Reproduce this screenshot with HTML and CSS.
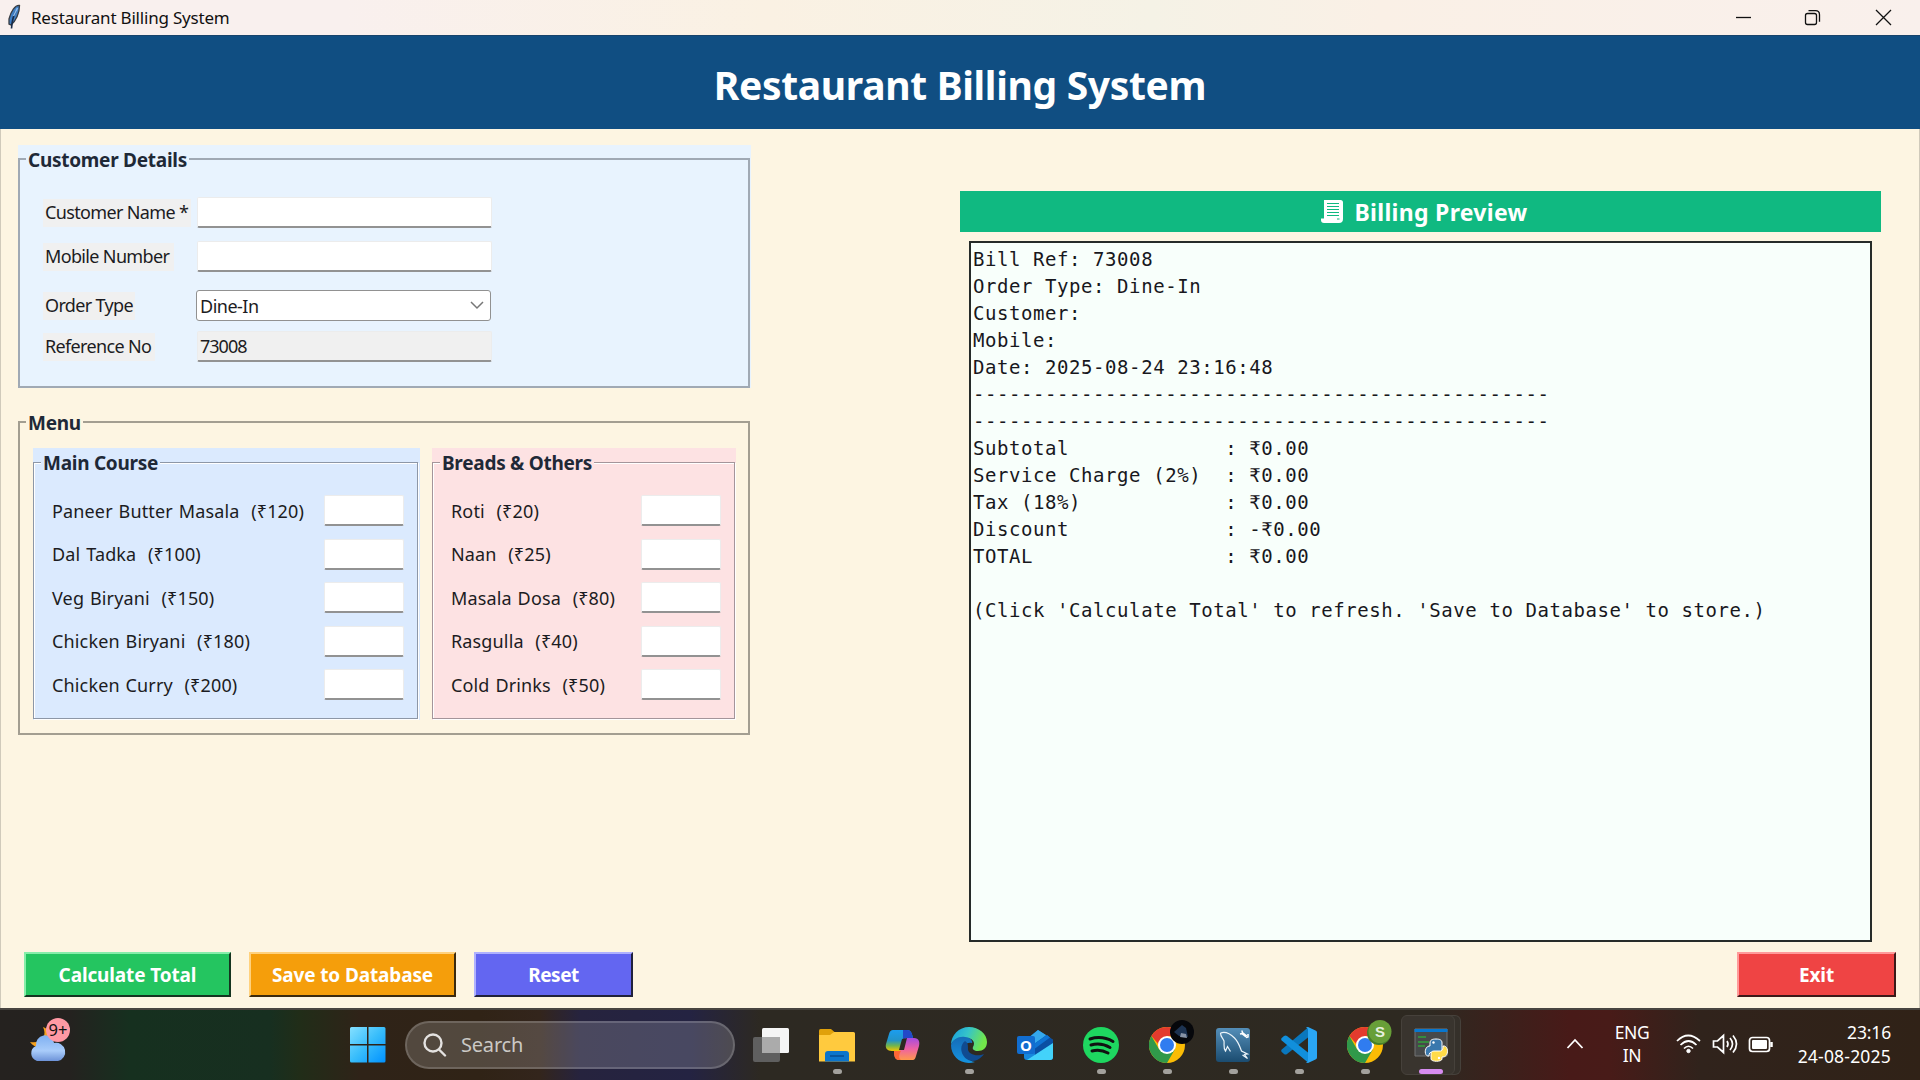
FILE: index.html
```html
<!DOCTYPE html>
<html lang="en">
<head>
<meta charset="utf-8">
<title>Restaurant Billing System</title>
<link rel="stylesheet" href="styles.css">
</head>
<body>
<div class="titlebar">
  <svg class="feather" width="16" height="26" viewBox="0 0 16 26"><path d="M13.500 1.500C9 1 5 7 3 15v5l2 1C10 17 13.500 9 13.500 1.500Z" fill="#3f7fc6" stroke="#3a3d42" stroke-width="1.300"/><path d="M10 7C7 12 6 17 5.500 24.500" fill="none" stroke="#172b4a" stroke-width="1.600"/><path d="M11.500 4 7.500 12" stroke="#8fbdf0" stroke-width="1.500"/></svg>
  <span class="window-name">Restaurant Billing System</span>
  <svg class="window-controls" width="180" height="34" viewBox="0 0 180 34" fill="none" stroke="#111" stroke-width="1.300"><path d="M16 16.500h15"/><rect x="85.500" y="12.500" width="11" height="11" rx="2"/><path d="M88.500 9.700h7q4 0 4 4v7"/><path d="m156 9 15 15m0-15-15 15"/></svg>
</div>
<header class="banner"><h1>Restaurant Billing System</h1></header>
<main class="app">
  <div class="columns">
    <div class="left">
      <section class="group customer">
        <div class="frame">
          <h2 class="legend">Customer Details</h2>
          <div class="field f1"><label class="l-name">Customer Name *</label><div class="entry"></div></div>
          <div class="field f2"><label class="l-mobile">Mobile Number</label><div class="entry"></div></div>
          <div class="field f3"><label class="l-type">Order Type</label><div class="entry combo"><span>Dine-In</span><svg width="14" height="9" viewBox="0 0 14 9"><path d="m1 1 6 6 6-6" fill="none" stroke="#777" stroke-width="1.500"/></svg></div></div>
          <div class="field f4"><label class="l-ref">Reference No</label><div class="entry readonly">73008</div></div>
        </div>
      </section>
      <section class="menu">
        <h2 class="legend">Menu</h2>
        <div class="group main-course">
          <div class="frame">
            <h2 class="legend">Main Course</h2>
            <div class="item"><span>Paneer Butter Masala&nbsp; (₹120)</span><div class="qty"></div></div>
            <div class="item"><span>Dal Tadka&nbsp; (₹100)</span><div class="qty"></div></div>
            <div class="item"><span>Veg Biryani&nbsp; (₹150)</span><div class="qty"></div></div>
            <div class="item"><span>Chicken Biryani&nbsp; (₹180)</span><div class="qty"></div></div>
            <div class="item"><span>Chicken Curry&nbsp; (₹200)</span><div class="qty"></div></div>
          </div>
        </div>
        <div class="group breads">
          <div class="frame">
            <h2 class="legend">Breads &amp; Others</h2>
            <div class="item"><span>Roti&nbsp; (₹20)</span><div class="qty"></div></div>
            <div class="item"><span>Naan&nbsp; (₹25)</span><div class="qty"></div></div>
            <div class="item"><span>Masala Dosa&nbsp; (₹80)</span><div class="qty"></div></div>
            <div class="item"><span>Rasgulla&nbsp; (₹40)</span><div class="qty"></div></div>
            <div class="item"><span>Cold Drinks&nbsp; (₹50)</span><div class="qty"></div></div>
          </div>
        </div>
      </section>
    </div>
    <div class="right">
      <div class="preview-title">
        <svg width="23" height="25" viewBox="0 0 23 25"><path d="M3 1h16.500q2.500 0 2.500 2.500V20q0 4-4 4H3q-3 0-3-3v-1.500h3Z" fill="#fff"/><path d="M6 4.500h12M6 7.500h12M6 10.500h12M6 13.500h12M6 16.500h12M16 20h2.500" fill="none" stroke="#10b981" stroke-width="1.100"/></svg>
        <h2>Billing Preview</h2>
      </div>
<pre class="bill">Bill Ref: 73008
Order Type: Dine-In
Customer:
Mobile:
Date: 2025-08-24 23:16:48
------------------------------------------------
------------------------------------------------
Subtotal             : ₹0.00
Service Charge (2%)  : ₹0.00
Tax (18%)            : ₹0.00
Discount             : -₹0.00
TOTAL                : ₹0.00

(Click 'Calculate Total' to refresh. 'Save to Database' to store.)</pre>
    </div>
  </div>
  <div class="actions">
    <button class="btn green">Calculate Total</button>
    <button class="btn orange">Save to Database</button>
    <button class="btn indigo">Reset</button>
    <button class="btn red">Exit</button>
  </div>
</main>
<footer class="taskbar">
  <svg class="weather" width="42" height="46" viewBox="0 0 42 46">
    <defs><linearGradient id="cloud" x2="0" y2="1"><stop stop-color="#7fb0f2"/><stop offset=".6" stop-color="#a9ccfa"/><stop offset="1" stop-color="#6d93d8"/></linearGradient></defs>
    <path d="M14 9c4 8 0 17-13 15 5 8 20 7 21-4 0-5-3-9-8-11Z" fill="#f5a11d"/>
    <path d="M8 43a8 8 0 0 1-1-15 9 9 0 0 1 18-3 9 9 0 0 1 4 18Z" fill="url(#cloud)"/>
    <circle cx="29" cy="12" r="12" fill="#ff99a4"/><text x="29" y="17.500" text-anchor="middle" class="badge-count">9+</text>
  </svg>
  <svg class="start" width="36" height="36" viewBox="0 0 36 36"><defs><linearGradient id="win" x2="1" y2="1"><stop stop-color="#85e0ff"/><stop offset=".5" stop-color="#38bdfb"/><stop offset="1" stop-color="#0091ff"/></linearGradient></defs><path d="M1.500 0H17v17H0V1.500Q0 0 1.500 0ZM18.500 0H34q1.500 0 1.500 1.500V17h-17ZM0 18.500h17v17H1.500Q0 35.500 0 34ZM18.500 18.500h17V34q0 1.500-1.500 1.500H18.500Z" fill="url(#win)"/></svg>
  <div class="search"><svg width="24" height="24" viewBox="0 0 24 24" fill="none" stroke="#e4e2e0" stroke-width="2.400"><circle cx="10" cy="10" r="8.500"/><path d="m16 16.500 6 6" stroke-linecap="round"/></svg><span>Search</span></div>
  <div class="tasks">
    <div class="task"><svg width="36" height="36" viewBox="0 0 36 36"><rect y="10" width="27" height="25" rx="2" fill="#5f5f5f"/><rect x="9" y="1" width="27" height="25" rx="1.500" fill="#f5f5f5"/><path d="M9 10h18v16H9Z" fill="#ababab"/></svg></div>
    <div class="task open"><svg width="36" height="36" viewBox="0 0 36 36"><path d="M0 3.500Q0 2 1.500 2H12l3.500 3L12 9H0Z" fill="#e0a10b"/><path d="M0 8h11l4-3h19.500q1.500 0 1.500 1.500V34.500H0Z" fill="#ffca3e"/><path d="M6 34.500V27q0-3 3-3h18q3 0 3 3v7.500Z" fill="#0c75cc"/><path d="M11 29h14" stroke="#084f94" stroke-width="1.600"/></svg></div>
    <div class="task"><svg width="36" height="36" viewBox="0 0 36 36"><defs><linearGradient id="cp1" x2="0" y2="1"><stop stop-color="#1b9df0"/><stop offset=".5" stop-color="#2394c8"/><stop offset=".75" stop-color="#72b54d"/><stop offset="1" stop-color="#f5c400"/></linearGradient><linearGradient id="cp2" x2="0" y2="1"><stop stop-color="#a64be0"/><stop offset=".5" stop-color="#ee62a3"/><stop offset="1" stop-color="#ff984c"/></linearGradient></defs><path d="M8 3h14c4 0 5 3 6 8h-4c-4 0-5 2-6 6l-2 7H7c-5 0-7-3-6-7L4 7q1-4 4-4Z" fill="url(#cp1)"/><path d="M18 3h4c4 0 5 3 6 8h-4l-6 2Z" fill="#2348c8"/><path d="M28 33H14c-4 0-5-4-5-9h3c4 0 5-2 6-6l2-7h9c5 0 6 4 5 8l-3 10q-1 4-3 4Z" fill="url(#cp2)"/><path d="m17 12-3 11h5l3-12Z" fill="#2d2922"/><path d="M9 24h7c-2 3-3 7 0 9h-2c-4 0-5-4-5-9Z" fill="#ff6735"/></svg></div>
    <div class="task open"><svg width="36" height="36" viewBox="0 0 36 36"><defs><linearGradient id="ed1" x2="1" y2=".3"><stop stop-color="#159be2"/><stop offset=".5" stop-color="#36c4c8"/><stop offset="1" stop-color="#72e64a"/></linearGradient><linearGradient id="ed2" x2="0" y2="1"><stop stop-color="#156bb7"/><stop offset="1" stop-color="#1593df"/></linearGradient></defs><path d="M0 18C0 8 8 0 18 0s18 7 18 15c0 6-4 9-9 9-4 0-6-2-5-4 3-5-1-9-6-9C8 10 2 12 0 18Z" fill="url(#ed1)"/><path d="M0 18c2-6 8-9 14-8 5 0 8 4 7 6-7-2-9 5-7 10 2 6 7 9 10 9C11 39 0 30 0 18Z" fill="url(#ed2)"/><path d="M14 14c-4 3-5 9-2 14 4 7 14 9 21-1-6 3-17 1-16-6 0-3 0-5-3-7Z" fill="#104b91"/></svg></div>
    <div class="task"><svg width="36" height="36" viewBox="0 0 36 36"><path d="M7 14 21 3l15 10v17q0 3-3 3H10q-3 0-3-3Z" fill="#1688dd"/><path d="m7 15 14-12 8 5-16 13Z" fill="#35a8ec"/><path d="m17 17 13-9 6 5v5L18 29Z" fill="#0a4fa3"/><path d="M17 17 30 8l3 2.500-15 11Z" fill="#0f74d4"/><path d="m10 33 26-17v14q0 3-3 3Z" fill="#43d2fa"/><rect y="9" width="18" height="18" rx="2" fill="#116dd0"/><text x="9" y="23.500" text-anchor="middle" class="icon-letter">O</text></svg></div>
    <div class="task open"><svg width="36" height="36" viewBox="0 0 36 36"><circle cx="18" cy="18" r="18" fill="#1ed760"/><path d="M7 12c8-2.500 16-1.500 23 2.500M8 18c7-2 13-1 19 2.500M9 24c6-1.500 11-.700 16 2" fill="none" stroke="#111" stroke-width="3" stroke-linecap="round"/></svg></div>
    <div class="task open"><svg width="46" height="44" viewBox="0 0 46 44" class="badged"><use href="#chrome"/><circle cx="33" cy="13" r="12" fill="#06070b"/><path d="m25 13 8-7 4 3 2 9-9-1Z" fill="#1d3352"/><path d="m32 14 5 1 1 4-7-1Z" fill="#8792a5"/></svg></div>
    <div class="task open"><svg width="36" height="36" viewBox="0 0 36 36"><defs><linearGradient id="sql" x2="0" y2="1"><stop stop-color="#548eb8"/><stop offset="1" stop-color="#1b4c70"/></linearGradient></defs><rect x="1" y="1" width="34" height="34" rx="3" fill="url(#sql)"/><path d="M5.500 6c5-2 10 1 14 5 4 4 5 8 7 13l6 3-3 .500 3 4-5-3.500M5.500 6c0 4 2.500 5 3.500 8 .500 4-1 7 1.500 10l2-4.500 3 5" fill="none" stroke="#edf5fa" stroke-width="1.200"/><path d="m27 6 4.500 3.500" stroke="#fff" stroke-width="2.700"/><path d="m27 3.500.500 3-2.500 .500m6 3.500 2-.500V7" stroke="#fff" stroke-width="1.500" fill="none"/></svg></div>
    <div class="task open"><svg width="36" height="36" viewBox="0 0 36 36"><path d="M.700 22.500 27 .500v10L6 27q-1.500 1-3 0L.700 25q-1-1.200 0-2.500Z" fill="#0a77bd"/><path d="M.700 13.500Q-.300 12 .700 11L3 9q1.500-1 3 0l21 16.500v10Z" fill="#118fdc"/><path d="M27 0l7.500 3.500Q36 4 36 5.500v25q0 1.500-1.500 2L27 36q-1.500 0-2-1 2 .500 2-1.500v-31Q27 .500 25 1q.500-1 2-1Z" fill="#2aa6f5"/></svg></div>
    <div class="task open"><svg width="46" height="44" viewBox="0 0 46 44" class="badged"><use href="#chrome"/><circle cx="32" cy="14" r="12" fill="#467f2b"/><circle cx="33" cy="12.500" r="11.500" fill="#689f38"/><text x="33" y="18" text-anchor="middle" class="profile-letter">S</text></svg></div>
    <div class="task open active"><svg width="36" height="36" viewBox="0 0 36 36"><path d="M2 2h32v27H2Z" fill="#47494a" stroke="#727272"/><path d="M1.500 2h33v3h-33Z" fill="#0877cf"/><path d="M5 10h8M5 15h11M5 19h7" stroke="#32a33a" stroke-width="1.300"/><path d="M17 18v-3c0-3 2-4 6-4s6 1 6 4v6c0 2-1 3-3 3h-6c-3 0-4 1-4 4-5 1-5-9 0-10Z" transform="translate(0 1)" fill="#3a78ad" stroke="#fff"/><path d="M30 19c6-1 6 11 0 11h-1v2c0 3-11 3-11 0v-5c0-2 1-3 3-3h6c2 0 3-1 3-5Z" fill="#ffdb48" stroke="#fff"/><circle cx="20.500" cy="15.500" r="1.200" fill="#fff"/><circle cx="26" cy="31" r="1.200" fill="#fff"/></svg></div>
  </div>
  <div class="tray">
    <svg class="up" width="18" height="12" viewBox="0 0 18 12"><path d="m1.500 10 7.500-8 7.500 8" fill="none" stroke="#fff" stroke-width="1.800"/></svg>
    <div class="lang">ENG<br>IN</div>
    <svg class="status" width="98" height="24" viewBox="0 0 98 24" fill="none" stroke="#fff" stroke-width="1.700"><path d="M1 9q11-11 23 0M4.500 13q8-8 16 0M8 16.500q4.500-4.500 9 0"/><circle cx="12.500" cy="19" r="1.700" fill="#fff" stroke-width="1"/><path d="M37.500 9h4l6-5.500v17l-6-5.500h-4ZM51 9q2 3 0 6M54 6q5 6 0 12M57 3.500q7 8.500 0 17"/><rect x="73.500" y="5.500" width="20" height="14" rx="3"/><rect x="76" y="8" width="15" height="9" rx="1" fill="#fff" stroke="none"/><path d="M95.500 10v5" stroke-width="2.500"/></svg>
    <div class="clock">23:16<br><span class="date">24-08-2025</span></div>
  </div>
</footer>
<svg width="0" height="0" class="defs"><defs><g id="chrome"><circle cx="18" cy="26" r="18" fill="#fbbc05"/><path d="M2.400 17A18 18 0 0 1 33.600 17H18v18L2.400 17Z" fill="#e33b2e"/><path d="M2.400 17A18 18 0 0 0 18 44l7.800-13.500L10.200 30.500Z" fill="#30994a"/><circle cx="18" cy="26" r="9" fill="#fff"/><circle cx="18" cy="26" r="7" fill="#307cf0"/></g></defs></svg>
</body>
</html>
```
FILE: styles.css
```css
* { box-sizing: border-box; }
body {
  margin: 0;
  width: 1920px;
  height: 1080px;
  overflow: hidden;
  display: flex;
  flex-direction: column;
  background: #fdf5e2;
  color: #1c1c22;
  font-family: "Noto Sans", "Open Sans", sans-serif;
  font-size: 18px;
}
h1, h2 { margin: 0; }
.defs { position: absolute; }
.titlebar {
  height: 35px;
  flex: none;
  display: flex;
  align-items: center;
  background: linear-gradient(90deg, #f9f0ee 0, #f9f0ee 18%, #faf1e3 40%, #f5f2e6 60%, #faf0e6 72%, #f9f0ec 100%);
}
.feather { margin-left: 6px; margin-bottom: 1px; }
.window-name { margin-left: 9px; font-size: 17px; letter-spacing: -0.2px; color: #111; }
.window-controls { margin-left: auto; margin-right: 20px; }
.banner {
  height: 94.300px;
  flex: none;
  background: #104e82;
  border-top: 1px solid #17436b;
  display: flex;
  justify-content: center;
  align-items: center;
}
.banner h1 { color: #fff; font-size: 39px; line-height: 50px; letter-spacing: -0.33px; white-space: nowrap; padding-top: 4px; }
.app {
  flex: 1;
  display: flex;
  flex-direction: column;
  border: solid #d0cabb;
  border-width: 0 1px;
}
.columns { flex: 1; display: flex; justify-content: space-between; padding: 16px 38px 0 17px; }
.left { width: 733px; }
.group { padding-top: 14px; }
.frame { border: 2px solid #a0a9b4; height: 100%; }
.legend {
  width: max-content;
  margin: -14px 0 0 6px;
  padding: 0 2px;
  font-size: 19px;
  line-height: 28px;
  letter-spacing: -0.27px;
  color: #1f2937;
  white-space: nowrap;
}
.customer { height: 243px; padding-top: 13px; background: #e8f3fe; }
.customer .frame { margin-right: 1px; }
.customer .legend { background: #e8f3fe; }
.field { display: flex; align-items: center; justify-content: space-between; height: 31px; padding-left: 23px; }
.field label { background: #f0f0f0; height: 28px; line-height: 27px; padding-left: 2px; letter-spacing: -0.65px; white-space: nowrap; }
.l-name { width: 148px; }
.l-mobile { width: 131px; }
.l-type { width: 92px; }
.l-ref { width: 112px; }
.entry {
  width: 295px;
  height: 31px;
  margin-right: 256px;
  background: #fff;
  border: 1px solid #ececec;
  border-bottom: 2px solid #929292;
  border-radius: 2px;
  padding: 0 2px;
  line-height: 28px;
  letter-spacing: -1px;
}
.combo { margin-right: 257px; border: 1.500px solid #919191; border-radius: 3px; display: flex; justify-content: space-between; align-items: center; padding: 0 6px 0 3px; letter-spacing: -0.5px; }
.readonly { background: #f0f0f0; }
.f1 { margin-top: 23px; }
.f2 { margin-top: 13px; }
.f3 { margin-top: 18px; }
.f4 { margin-top: 10px; }
.menu {
  width: 732px;
  height: 314px;
  margin-top: 33px;
  border: 2px solid #a39e91;
  display: grid;
  grid-template-columns: 387px 304px;
  grid-template-rows: 25px 272px;
  column-gap: 12px;
  padding-left: 13px;
}
.menu > .legend { grid-column: 1 / 3; margin-left: -7px; background: #fdf5e2; }
.main-course { background: #dbeafe; }
.main-course .legend { background: #dbeafe; }
.breads { background: #fde2e3; }
.breads .legend { background: #fde2e3; }
.menu .group .legend { margin-left: 7px; }
.menu .frame { border: 1.500px solid #8d97a7; box-shadow: inset 1px 1px #fff, 1px 1px #fff; margin-right: 2px; height: 257px; }
.menu .breads .frame { border-color: #a4959a; margin-right: 1px; }
.item { display: flex; align-items: center; justify-content: space-between; height: 31px; margin: 0 13px 12.500px 18px; letter-spacing: 0.15px; word-spacing: 1px; white-space: nowrap; }
.frame .legend + .item { margin-top: 18px; }
.qty { width: 80px; height: 31px; background: #fff; border: 1px solid #ececec; border-bottom: 2px solid #929292; border-radius: 2px; }
.right { width: 921px; padding-top: 46px; }
.preview-title { height: 41px; background: #10b981; display: flex; align-items: center; justify-content: center; gap: 10px; padding-left: 8px; color: #fff; }
.preview-title h2 { font-size: 23px; line-height: 30px; letter-spacing: 0.3px; }
.bill {
  margin: 9px 9px 0;
  height: 701px;
  background: #f8fffb;
  border: 2px solid #262b29;
  padding: 3px 2px;
  font: 19px/27px "DejaVu Sans Mono", monospace;
  letter-spacing: 0.57px;
  color: #18181d;
}
.actions { display: flex; gap: 18px; padding: 0 23px 11px; }
.btn {
  height: 45px;
  width: 207px;
  padding: 1px 0 0;
  border: 2px solid #222;
  color: #fff;
  font: bold 19px/28px "Noto Sans", sans-serif;
  letter-spacing: -0.13px;
}
.green { background: #24c560; border-color: #86eeaa #153420 #153420 #86eeaa; }
.orange { background: #f59e0b; border-color: #ffd17d #3c2a0e #3c2a0e #ffd17d; }
.indigo { background: #6366f1; border-color: #afb1ff #20213c #20213c #afb1ff; width: 159px; letter-spacing: -0.5px; }
.red { background: #ef4444; border-color: #ff9a9a #3c1919 #3c1919 #ff9a9a; width: 159px; margin-left: auto; }
.taskbar {
  height: 72px;
  flex: none;
  display: flex;
  align-items: center;
  color: #fff;
  border-top: 2px solid #484440;
  background: linear-gradient(90deg, #25221f 0, #24221f 70px, #16301f 130px, #172f20 270px, #212d18 300px, #2f2318 360px, #302316 480px, #33251c 540px, #26233e 580px, #242342 690px, #2d2922 760px, #2e2921 1430px, #3b211c 1500px, #481a18 1570px, #481b18 1610px, #30231c 1700px, #302217 1920px);
}
.weather { margin-left: 29px; margin-top: -9px; }
.badge-count { font: 16.500px "Noto Sans", sans-serif; fill: #111; }
.start { margin-left: 279px; margin-bottom: 1px; }
.search { margin: 0 0 1px 19px; width: 330px; height: 48px; border: 2px solid rgba(255,255,255,.16); border-radius: 24px; background: rgba(255,255,255,.17); display: flex; align-items: center; padding-left: 16px; }
.search span { margin-left: 14px; font-size: 20px; letter-spacing: -0.2px; color: #cbc9c5; }
.tasks { display: flex; margin-left: 3px; }
.task { width: 66px; height: 60px; display: flex; justify-content: center; align-items: center; position: relative; }
.task svg { flex: none; }
.badged { margin: -8px -10px 0 0; }
.open::after { content: ""; position: absolute; left: 29px; bottom: 1px; width: 9px; height: 5px; border-radius: 3px; background: #a3a19d; }
.active { width: 54px; margin: 0 3px; padding-left: 5px; border: 1px solid #46413b; border-radius: 6px; background: #39342e; box-shadow: 6px 0 0 -1px #35302a, 6px 0 #46413b; }
.active::after { left: 17px; bottom: 0; width: 24px; background: #d68cf0; }
.icon-letter { font: bold 15px "Noto Sans", sans-serif; fill: #fff; }
.profile-letter { font: bold 15px "Liberation Sans", sans-serif; fill: #e7f0df; }
.tray { margin-left: auto; margin-bottom: 2px; display: flex; align-items: center; padding-right: 29px; font-size: 17.500px; line-height: 24px; letter-spacing: -0.4px; }
.lang { width: 60px; margin-left: 18px; text-align: center; line-height: 23px; }
.status { margin-left: 14px; }
.clock { width: 117px; text-align: right; letter-spacing: -0.15px; }
.date { letter-spacing: 0.2px; }
```
